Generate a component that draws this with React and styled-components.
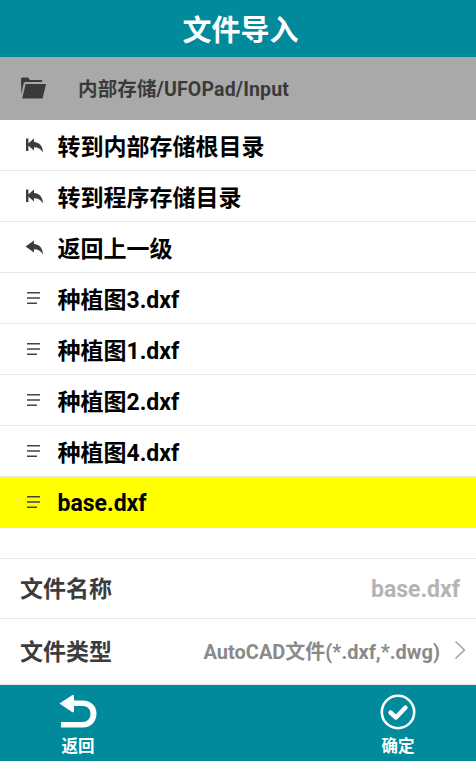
import styled, { createGlobalStyle } from 'styled-components';

const GlobalStyle = createGlobalStyle`
    html, body {
        margin: 0;
        padding: 0;
        background: #fff;
        font-family: Roboto, "Noto Sans CJK SC", sans-serif;
    }
`;

const Page = styled.div`
    width: 476px;
    height: 761px;
    display: flex;
    flex-direction: column;
    overflow: hidden;
`;
const Header = styled.header`
    height: 57px;
    flex: none;
    display: flex;
    align-items: center;
    justify-content: center;
    padding: 0 0 2px 5px;
    box-sizing: border-box;
    background-color: #008a9c;
    color: #fff;
    font-size: 29px;
    font-weight: 700;
`;
const PathBar = styled.div`
    height: 63px;
    flex: none;
    box-sizing: border-box;
    display: flex;
    align-items: center;
    padding: 0 0 2px 21px;
    background-color: #a9a9a9;
    color: #3a3a3a;
    font-size: 19.5px;
    font-weight: 700;
    letter-spacing: 0.15px;
    svg {
        flex: none;
        margin-right: 32px;
    }
`;
const List = styled.ul`
    margin: 0;
    padding: 0;
    list-style: none;
`;
const Row = styled.li`
    height: 51px;
    box-sizing: border-box;
    display: flex;
    align-items: center;
    padding-left: 25px;
    background-color: ${(props) => (props.$active ? '#ffff00' : '#fff')};
    border-bottom: 1px solid ${(props) => (props.$active ? '#ffff00' : '#e6e6e6')};
    color: #000;
    font-size: 23px;
    font-weight: 700;
`;
const RowIcon = styled.span`
    width: 32.5px;
    flex: none;
    display: flex;
    align-items: center;
    svg {
        display: block;
    }
`;
const RowText = styled.span`
    margin-top: ${(props) => (props.$active ? '2px' : '0')};
`;
const Spacer = styled.div`
    height: 30px;
    flex: none;
    border-bottom: 1px solid #e6e6e6;
`;
const Field = styled.div`
    height: ${(props) => props.$height}px;
    box-sizing: border-box;
    flex: none;
    display: flex;
    align-items: center;
    justify-content: space-between;
    padding: 0 ${(props) => props.$right}px 0 20px;
    border-bottom: 1px solid #e6e6e6;
`;
const Label = styled.span`
    color: #3c3c3c;
    font-size: 23px;
    font-weight: 700;
    margin-bottom: 4px;
`;
const FileName = styled.span`
    color: #b4b4b4;
    font-size: 23px;
    font-weight: 700;
    margin: 2px 1px 0 0;
`;
const TypeValue = styled.span`
    display: flex;
    align-items: center;
    color: #8a8a8a;
    font-size: 20px;
    font-weight: 700;
    margin-bottom: 3px;
    svg {
        margin-left: 14px;
    }
`;
const Footer = styled.footer`
    height: 76px;
    flex: none;
    display: flex;
    justify-content: space-between;
    padding: 9px 45px 0 45px;
    box-sizing: border-box;
    background-color: #008a9c;
`;
const Action = styled.button`
    width: 66px;
    padding: 0;
    border: 0;
    background: none;
    display: flex;
    flex-direction: column;
    align-items: center;
    color: #fff;
    font-family: inherit;
    font-size: 16.5px;
    font-weight: 700;
    line-height: 20px;
    svg {
        display: block;
        margin-bottom: 7px;
    }
`;

const FolderIcon = () => (
    <svg width="25" height="22" viewBox="0 0 25 22" fill="#3a3a3a">
        <path d="M0 2Q0 0.5 1.5 0.5H7L9 3H21V5H4.5Q3 5 2.5 7L0.4 17Z" />
        <path d="M4.6 7H25L21.6 21.5H1.2Z" />
    </svg>
);

const ReplyAllIcon = () => (
    <svg width="19" height="15" viewBox="0 0 19 15" fill="#3c3c3c">
        <path d="M1 0.5H3.4V13H1Z" />
        <path d="M2 6.5L9 0.5V4C14.5 4.2 17.8 8.5 18 14.5C16 11 13 9.2 9 9.2V12.5Z" />
    </svg>
);

const ReplyIcon = () => (
    <svg width="19" height="15" viewBox="0 0 19 15" fill="#3c3c3c">
        <path d="M0.5 6.5L9 0.5V4C14.5 4.2 17.8 8.5 18 14.5C16 11 13 9.2 9 9.2V12.5Z" />
    </svg>
);

const FileLines = () => (
    <svg width="16" height="14" viewBox="0 0 16 14" fill="none" stroke="#444" strokeWidth="1.6">
        <path d="M2 1.7H15M2 7H15M2 12.3H12" />
    </svg>
);

const BackIcon = () => (
    <svg width="38" height="36" viewBox="0 0 38 36">
        <path d="M0.5 9.5L13 1.2C14 0.6 15 1.2 15 2.3V6.5H24C32 6.5 37.5 12 37.5 19.5C37.5 27.5 32 33.5 24 33.5H2V28H24C28.5 28 31.5 24.5 31.5 19.8C31.5 15.2 28.5 12 24 12H15V17C15 18 14 18.6 13 18L0.5 9.5Z" fill="#fff" />
    </svg>
);

const CheckIcon = () => (
    <svg width="36" height="36" viewBox="0 0 36 36" fill="none" stroke="#fff">
        <circle cx="18" cy="18" r="16.2" strokeWidth="2.6" />
        <path d="M10.5 18.5L16 23.5L25.5 13.5" strokeWidth="4.4" strokeLinecap="round" strokeLinejoin="round" />
    </svg>
);

const Chevron = () => (
    <svg width="12" height="20" viewBox="0 0 12 20" fill="none" stroke="#a0a0a0" strokeWidth="1.5">
        <path d="M1.5 1.5L10.5 10L1.5 18.5" />
    </svg>
);

const rows = [
    { icon: <ReplyAllIcon />, text: '转到内部存储根目录' },
    { icon: <ReplyAllIcon />, text: '转到程序存储目录' },
    { icon: <ReplyIcon />, text: '返回上一级' },
    { icon: <FileLines />, text: '种植图3.dxf' },
    { icon: <FileLines />, text: '种植图1.dxf' },
    { icon: <FileLines />, text: '种植图2.dxf' },
    { icon: <FileLines />, text: '种植图4.dxf' },
    { icon: <FileLines />, text: 'base.dxf', active: true },
];

const App = () => (
    <Page>
        <GlobalStyle />
        <Header>文件导入</Header>
        <PathBar>
            <FolderIcon />
            内部存储/UFOPad/Input
        </PathBar>
        <List>
            {rows.map((row) => (
                <Row key={row.text} $active={row.active}>
                    <RowIcon>{row.icon}</RowIcon>
                    <RowText $active={row.active}>{row.text}</RowText>
                </Row>
            ))}
        </List>
        <Spacer />
        <Field $height={60} $right={15}>
            <Label>文件名称</Label>
            <FileName>base.dxf</FileName>
        </Field>
        <Field $height={66} $right={10}>
            <Label>文件类型</Label>
            <TypeValue>
                AutoCAD文件(*.dxf,*.dwg)
                <Chevron />
            </TypeValue>
        </Field>
        <Footer>
            <Action>
                <BackIcon />
                返回
            </Action>
            <Action>
                <CheckIcon />
                确定
            </Action>
        </Footer>
    </Page>
);

export default App;
